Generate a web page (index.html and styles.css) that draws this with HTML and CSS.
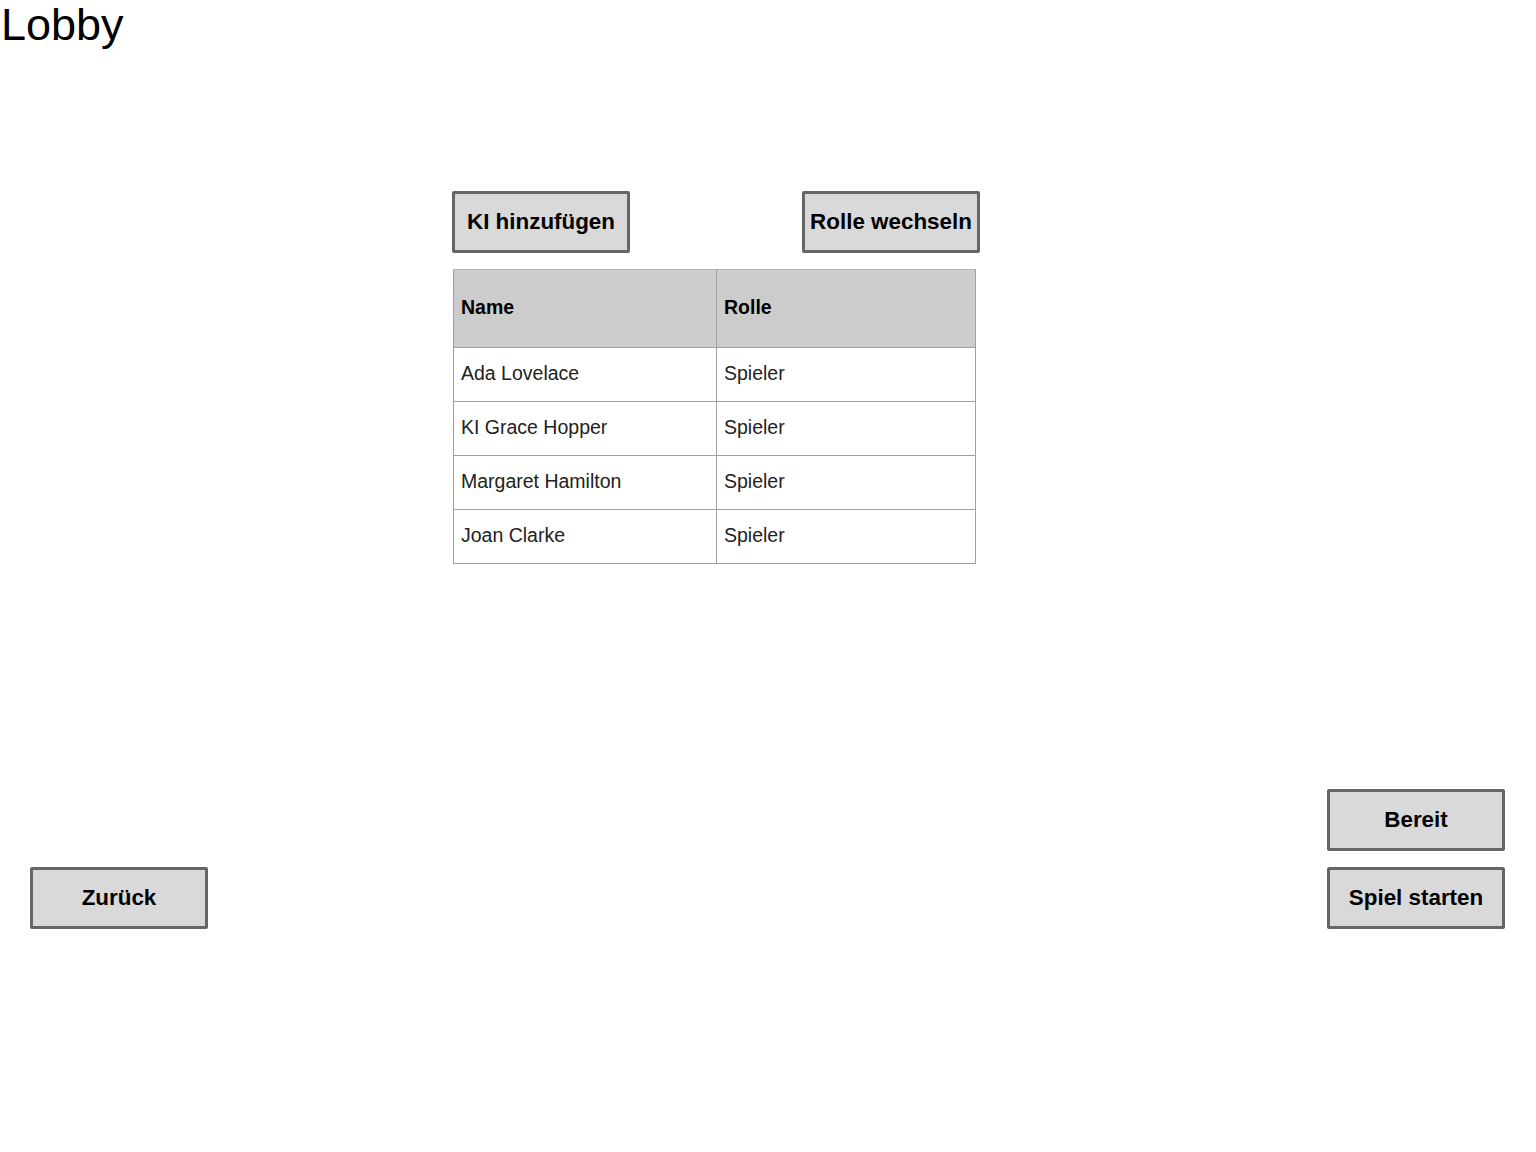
FILE: index.html
```html
<!DOCTYPE html>
<html lang="de">
<head>
<meta charset="utf-8">
<title>Lobby</title>
<link rel="stylesheet" href="styles.css">
</head>
<body>
<h1 class="title">Lobby</h1>
<section class="lobby">
  <div class="toolbar">
    <button class="btn">KI hinzufügen</button>
    <button class="btn">Rolle wechseln</button>
  </div>
  <table class="players">
    <thead>
      <tr><th>Name</th><th>Rolle</th></tr>
    </thead>
    <tbody>
      <tr><td>Ada Lovelace</td><td>Spieler</td></tr>
      <tr><td>KI Grace Hopper</td><td>Spieler</td></tr>
      <tr><td>Margaret Hamilton</td><td>Spieler</td></tr>
      <tr><td>Joan Clarke</td><td>Spieler</td></tr>
    </tbody>
  </table>
</section>
<footer class="actions">
  <button class="btn">Zurück</button>
  <div class="stack">
    <button class="btn">Bereit</button>
    <button class="btn">Spiel starten</button>
  </div>
</footer>
</body>
</html>
```
FILE: styles.css
```css
html, body {
  margin: 0;
  padding: 0;
  background: #ffffff;
  font-family: "Liberation Sans", Arial, sans-serif;
  color: #000;
}

.title {
  margin: 0 0 0 1px;
  font-size: 45px;
  font-weight: normal;
  line-height: 49px;
}

.lobby {
  margin: 142px 0 0 452px;
  width: 528px;
}

.toolbar {
  display: flex;
  justify-content: space-between;
  margin-bottom: 16px;
}

.btn {
  box-sizing: border-box;
  width: 178px;
  height: 62px;
  padding: 0;
  background: #d9d9d9;
  border: 3px solid #666666;
  border-radius: 2px;
  font-family: "Liberation Sans", Arial, sans-serif;
  font-weight: bold;
  font-size: 22.4px;
  color: #000;
}

.players {
  margin-left: 1px;
  width: 523px;
  border-collapse: collapse;
  font-size: 19.5px;
  color: #222;
}

.players th,
.players td {
  border: 1px solid #a0a0a0;
  padding: 0 0 2px 7px;
  text-align: left;
}

.players th {
  background: #cccccc;
  height: 75px;
  font-weight: bold;
  color: #000;
  border-color: #b4b4b4 #a0a0a0 #a0a0a0 #a0a0a0;
}

.players td {
  height: 51px;
}

.players td:first-child,
.players th:first-child {
  width: 255px;
}

.actions {
  display: flex;
  justify-content: space-between;
  align-items: flex-end;
  margin-top: 225px;
  padding: 0 31px 0 30px;
}

.stack {
  display: flex;
  flex-direction: column;
  gap: 16px;
}
```
